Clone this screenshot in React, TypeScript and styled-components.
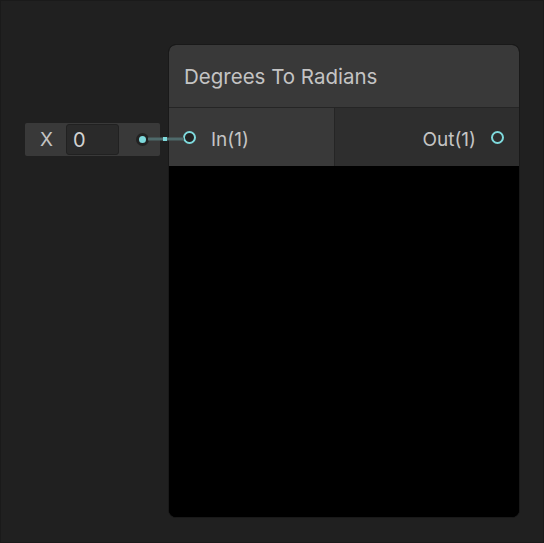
import React from "react";
import styled, { createGlobalStyle } from "styled-components";

const Global = createGlobalStyle`
  html, body { margin: 0; padding: 0; background: #202020; }
  body { font-family: Inter, "Noto Sans", sans-serif; }
  #root { width: 544px; height: 543px; }
  * { box-sizing: border-box; }
`;

const Canvas = styled.div`
  position: relative;
  width: 544px;
  height: 543px;
  background: #202020;
  border: 1px solid #1a1a1a;
  overflow: hidden;
`;

const Node = styled.div<{ $x: number; $y: number; $w: number; $h: number }>`
  position: absolute;
  left: ${(p) => p.$x}px;
  top: ${(p) => p.$y}px;
  width: ${(p) => p.$w}px;
  height: ${(p) => p.$h}px;
  border: 1px solid #191919;
  border-radius: 8px;
  overflow: hidden;
  display: flex;
  flex-direction: column;
  background: #000;
`;

const Title = styled.div`
  height: 63px;
  flex: none;
  background: #393939;
  border-bottom: 1px solid #252525;
  display: flex;
  align-items: center;
  padding-left: 15px;
  padding-top: 1px;
  color: #c4c4c4;
  font-size: 20.5px;
  font-weight: 400;
`;

const PortsRow = styled.div`
  height: 58px;
  flex: none;
  display: flex;
`;

const InputContainer = styled.div`
  width: 166px;
  background: #393939;
  border-right: 1px solid #252525;
  display: flex;
  align-items: center;
  padding-left: 14px;
  gap: 15px;
`;

const OutputContainer = styled.div`
  flex: 1;
  background: #2e2e2e;
  display: flex;
  align-items: center;
  justify-content: flex-end;
  padding-right: 15px;
  gap: 15px;
`;

const PortLabel = styled.span`
  color: #c4c4c4;
  font-size: 19px;
  margin-top: 4px;
`;

const PortRing = styled.span<{ $fill: string }>`
  width: 13px;
  height: 13px;
  border-radius: 50%;
  border: 2px solid #7ed9dc;
  background: ${(p) => p.$fill};
  flex: none;
`;

const Preview = styled.div`
  flex: 1;
  background: #000;
`;

const PropNode = styled.div<{ $x: number; $y: number }>`
  position: absolute;
  left: ${(p) => p.$x}px;
  top: ${(p) => p.$y}px;
  width: 135px;
  height: 33px;
  background: #393939;
  border-radius: 2px;
  display: flex;
  align-items: center;
  padding-left: 15px;
`;

const AxisLabel = styled.span`
  color: #c4c4c4;
  font-size: 19px;
  width: 26px;
`;

const NumField = styled.div`
  width: 53px;
  height: 31px;
  background: #2a2a2a;
  border: 1px solid #212121;
  border-radius: 3px;
  color: #d2d2d2;
  font-size: 20px;
  display: flex;
  align-items: center;
  padding-left: 6px;
`;

const OutDot = styled.span`
  margin-left: auto;
  margin-right: 11px;
  width: 13px;
  height: 13px;
  border-radius: 50%;
  background: #7ed9dc;
  border: 3px solid #222;
`;

const Wire = styled.svg`
  position: absolute;
  left: 0;
  top: 0;
  pointer-events: none;
`;

export default function App() {
  return (
    <>
      <Global />
      <Canvas>
        <Node $x={167} $y={43} $w={352} $h={474}>
          <Title>Degrees To Radians</Title>
          <PortsRow>
            <InputContainer>
              <PortRing $fill="#232323" />
              <PortLabel>In(1)</PortLabel>
            </InputContainer>
            <OutputContainer>
              <PortLabel>Out(1)</PortLabel>
              <PortRing $fill="#2e2e2e" />
            </OutputContainer>
          </PortsRow>
          <Preview />
        </Node>
        <PropNode $x={24} $y={122}>
          <AxisLabel>X</AxisLabel>
          <NumField>0</NumField>
          <OutDot />
        </PropNode>
        <Wire width="544" height="543">
          <line x1="147" y1="138" x2="183" y2="138" stroke="#4f6a6b" strokeWidth="3" />
          <rect x="162" y="136" width="4" height="4" fill="#7ed9dc" />
        </Wire>
      </Canvas>
    </>
  );
}
